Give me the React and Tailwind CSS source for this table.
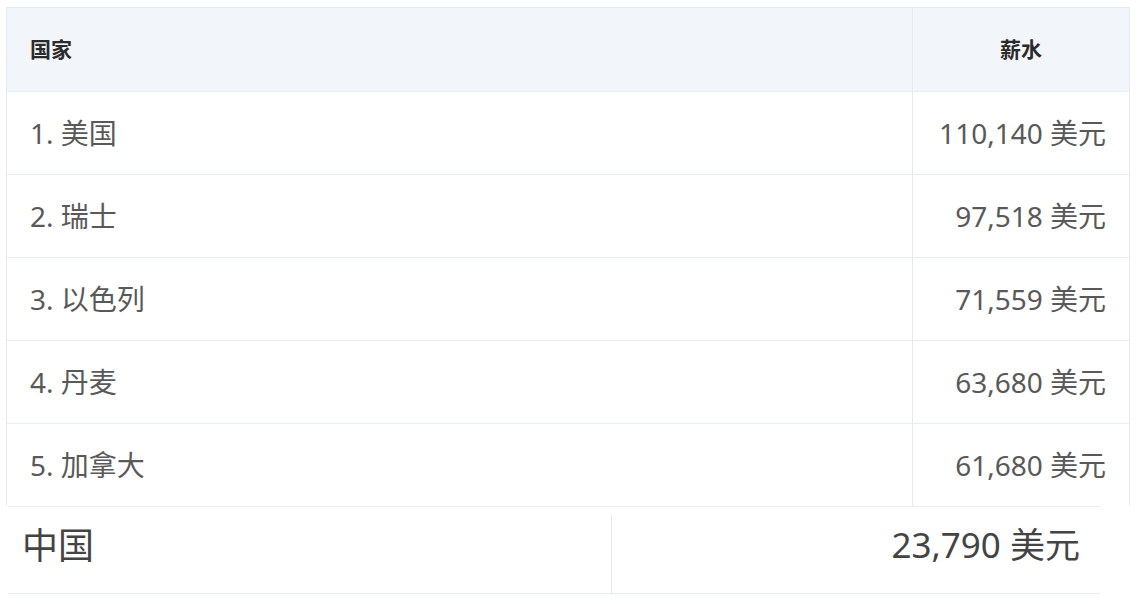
const rows = [
  { name: '1. 美国', pay: '110,140 美元' },
  { name: '2. 瑞士', pay: '97,518 美元' },
  { name: '3. 以色列', pay: '71,559 美元' },
  { name: '4. 丹麦', pay: '63,680 美元' },
  { name: '5. 加拿大', pay: '61,680 美元' },
];

const font = { fontFamily: '"Noto Sans", "Noto Sans CJK SC", sans-serif' };

export default function App() {
  return (
    <div className="w-[1143px] h-[604px] bg-white overflow-hidden pt-[7px]" style={font}>
      {/* main table */}
      <div className="ml-[6px] w-[1124px] border-l border-r border-t border-[#e6eaee]">
        <div className="grid grid-cols-[905px_1fr] h-[83px] bg-[#f2f6fa]">
          <div className="flex items-center pl-[23px] text-[21px] font-bold text-[#2b2b2b]">国家</div>
          <div className="flex items-center justify-center border-l border-[#e6eaee] text-[21px] font-bold text-[#2b2b2b]">
            薪水
          </div>
        </div>
        {rows.map((r) => (
          <div key={r.name} className="grid grid-cols-[905px_1fr] h-[83px] border-t border-[#e9edf0]">
            <div className="flex items-center pl-[23px] text-[28px] text-[#595959]">{r.name}</div>
            <div className="flex items-center justify-end pr-[23px] border-l border-[#e6eaee] text-[28px] text-[#595959]">
              {r.pay}
            </div>
          </div>
        ))}
      </div>

      {/* china row */}
      <div className="ml-[8px] w-[1092px] h-[88px] grid grid-cols-[603px_1fr] border-t border-b border-[#e9edf0]">
        <div className="flex items-center pl-[14px] pb-[9px] text-[36px] text-[#444]">中国</div>
        <div className="mt-[8px] flex items-center justify-end pr-[20px] pb-[17px] border-l border-[#e4e7ea] text-[35px] text-[#444]">
          23,790 美元
        </div>
      </div>
    </div>
  );
}
